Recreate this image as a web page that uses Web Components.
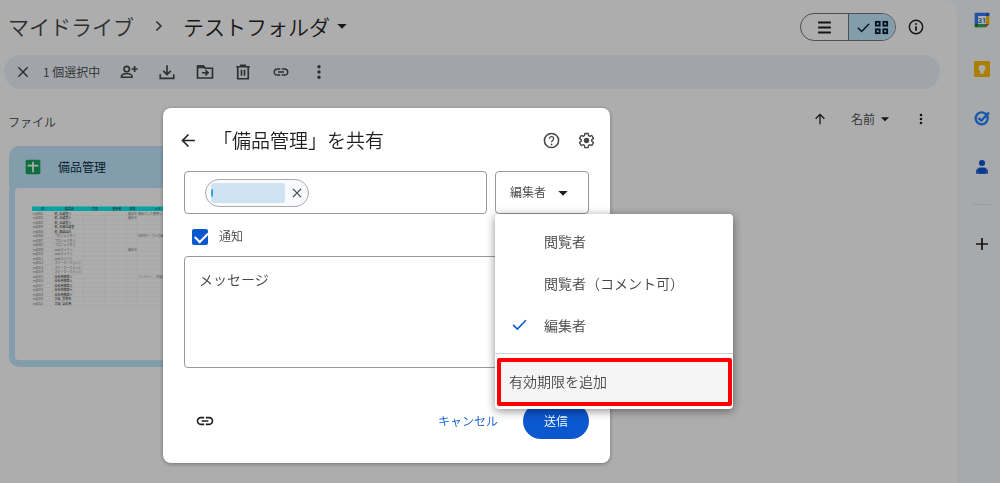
<!DOCTYPE html>
<html lang="ja">
<head>
<meta charset="utf-8">
<meta name="viewport" content="width=device-width, initial-scale=1">
<title>テストフォルダ - マイドライブ</title>
<style>
html, body { height: 100%; }
body { margin: 0; overflow: hidden; background: #f8fafd; color: #1f1f1f; font-family: "Noto Sans CJK JP", sans-serif; font-weight: 350; }
</style>
</head>
<body>
<drive-app></drive-app>
<script>
const ICONS = {
  close: '<path d="M5 5l14 14M19 5L5 19" class="s"/>',
  person: '<g class="s"><circle cx="9" cy="8" r="3.6"/><path d="M2 19v-1.500c0-2.200 4-3.500 7-3.500s7 1.300 7 3.500V19z"/><path d="M19.500 4v8M15.500 8h8"/></g>',
  download: '<path d="M12 3v12M7 10.500l5 5 5-5M3 15v5.500h18V15" class="s"/>',
  folder: '<path d="M2 4v16h20V7H12l-2-3H2z" class="s"/><path d="M8 13h7M12.500 9.500L16 13l-3.500 3.500" class="s"/><path d="M2 3h8l3 4H2z"/>',
  trash: '<path d="M5 6v15h14V6M3 5h18M9 4.500V3h6v1.500M10 9v8M14 9v8" class="s"/>',
  link: '<path d="M3.900 12c0-1.710 1.390-3.100 3.100-3.100h4V7H7c-2.760 0-5 2.240-5 5s2.240 5 5 5h4v-1.900H7c-1.710 0-3.100-1.390-3.100-3.100zM8 13h8v-2H8v2zm9-6h-4v1.900h4c1.710 0 3.100 1.390 3.100 3.100s-1.390 3.100-3.100 3.100h-4V17h4c2.760 0 5-2.240 5-5s-2.240-5-5-5z"/>',
  dots: '<circle cx="12" cy="5" r="2.200"/><circle cx="12" cy="12" r="2.200"/><circle cx="12" cy="19" r="2.200"/>',
  chevron: '<path d="M8.500 6l6 6-6 6" class="s"/>',
  caret: '<path d="M5 9h14l-7 7z"/>',
  list: '<path d="M3 5h18M3 12h18M3 19h18" class="s" style="stroke-width:3"/>',
  check: '<path d="M3 12.500l6 6L21 6" class="s"/>',
  grid: '<g class="s" style="stroke-width:3"><rect x="3" y="3" width="6" height="6"/><rect x="15" y="3" width="6" height="6"/><rect x="3" y="15" width="6" height="6"/><rect x="15" y="15" width="6" height="6"/></g>',
  info: '<circle cx="12" cy="12" r="10" class="s"/><path d="M12 11v6.500" class="s" style="stroke-width:2.600"/><circle cx="12" cy="7.500" r="1.500"/>',
  up: '<path d="M12 21V4M4.500 11.500L12 4l7.500 7.500" class="s"/>',
  back: '<path d="M21 12H4M12 3.500L3.500 12l8.500 8.500" class="s"/>',
  help: '<circle cx="12" cy="12" r="10" class="s"/><path d="M9 9.500c0-3.800 6-3.800 6 0 0 2.300-3 2.500-3 5" class="s" style="stroke-width:1.800"/><circle cx="12" cy="17.500" r="1.300"/>',
  gear: '<path d="M19.430 12.980c.04-.32.07-.64.07-.98 0-.34-.03-.66-.07-.98l2.110-1.650c.19-.15.24-.42.12-.64l-2-3.460c-.09-.16-.26-.25-.44-.25-.06 0-.12.01-.17.03l-2.490 1c-.52-.4-1.080-.73-1.690-.98l-.38-2.650C14.460 2.180 14.250 2 14 2h-4c-.25 0-.46.18-.49.42l-.38 2.650c-.61.25-1.170.59-1.690.98l-2.490-1c-.06-.02-.12-.03-.18-.03-.17 0-.34.09-.43.25l-2 3.460c-.13.22-.07.49.12.64l2.110 1.650c-.04.32-.07.65-.07.98 0 .33.03.66.07.98l-2.110 1.650c-.19.15-.24.42-.12.64l2 3.460c.09.16.26.25.44.25.06 0 .12-.01.17-.03l2.490-1c.52.4 1.080.73 1.690.98l.38 2.650c.03.24.24.42.49.42h4c.25 0 .46-.18.49-.42l.38-2.650c.61-.25 1.170-.59 1.690-.98l2.490 1c.06.02.12.03.18.03.17 0 .34-.09.43-.25l2-3.460c.12-.22.07-.49-.12-.64z" class="s" style="stroke-width:2"/><circle cx="12" cy="12" r="3.800"/>',
  plus: '<path d="M12 3v18M3 12h18" class="s" style="stroke-width:2.600"/>',
  sheets: '<rect x="1" y="1" width="22" height="22" rx="2.500" fill="#16a45c"/><path d="M12 4v16M4 10h16" fill="none" stroke="#fff" stroke-width="2.600"/>',
  calendar: '<path d="M2 1h16v5H6v12H1V2z" fill="#3479f4"/><path d="M18 1h4a1 1 0 0 1 1 1v4h-5z" fill="#1b5fd0"/><path d="M18 6h5v12h-5z" fill="#fbbc04"/><path d="M6 18h12v5H6z" fill="#34a853"/><path d="M1 18h5v5H2a1 1 0 0 1-1-1z" fill="#188038"/><path d="M18 18h5l-5 5z" fill="#ea4335"/><path d="M6 6h12v12H6z" fill="#fff"/><text x="12" y="16" text-anchor="middle" font-family="Roboto" font-size="11" font-weight="500" fill="#1967d2">31</text>',
  keep: '<rect x="0" y="0" width="24" height="24" rx="2" fill="#fbbc04"/><circle cx="12" cy="11" r="5" fill="#fff"/><path d="M9.500 15h5v4h-5z" fill="#fff"/>',
  tasks: '<circle cx="11.500" cy="12.500" r="9" fill="none" stroke="#2684fc" stroke-width="3.600"/><path d="M6.500 12l4.500 4L22.500 4" fill="none" stroke="#2684fc" stroke-width="3.600"/>',
  contact: '<circle cx="12" cy="6" r="4.600" fill="#0b57d0"/><path d="M3 22v-4c0-3 3-5 6-5h6c3 0 6 2 6 5v4z" fill="#3b63e0"/><path d="M7 13h10v9H7z" fill="#0b57d0"/>'
};

const BASE = `*{box-sizing:border-box}
button,input,select,textarea{font:inherit;color:inherit;margin:0}
button{border:0;background:none;padding:0;display:flex;align-items:center;justify-content:center;line-height:inherit}
h1,h2,p,ul,ol{margin:0;padding:0;font:inherit;list-style:none}
a{color:inherit;text-decoration:none}`;

function define(name, css, html) {
  const template = document.createElement('template');
  template.innerHTML = `<style>${BASE}${css}</style>${html}`;
  customElements.define(name, class extends HTMLElement {
    constructor() {
      super();
      this.attachShadow({ mode: 'open' }).append(template.content.cloneNode(true));
    }
  });
}

customElements.define('drive-icon', class extends HTMLElement {
  connectedCallback() {
    const root = this.shadowRoot || this.attachShadow({ mode: 'open' });
    root.innerHTML = `<style>:host{display:block;flex:none;width:var(--size,18px);height:var(--size,18px)}
      svg{display:block;width:100%;height:100%;fill:currentColor}
      .s{fill:none;stroke:currentColor;stroke-width:2.200}</style>
      <svg viewBox="0 0 24 24" aria-hidden="true">${ICONS[this.getAttribute('name')]}</svg>`;
  }
});

define('drive-breadcrumbs', `:host{display:block;font-size:21px;line-height:24px}
  ol{display:flex;align-items:center}
  li:first-child{color:#444746}
  .sep{--size:18px;margin:0 15px 0 16px;color:#444746}
  button{gap:4px;--size:16px}`,
  `<nav aria-label="パンくずリスト"><ol>
    <li><a href="#my-drive">マイドライブ</a></li>
    <li class="sep"><drive-icon name="chevron"></drive-icon></li>
    <li><button>テストフォルダ<drive-icon name="caret"></drive-icon></button></li>
  </ol></nav>`);

define('drive-view-toggle', `:host{display:flex;align-items:center;gap:12px}
  .group{display:flex;border:1px solid #747775;border-radius:14px;overflow:hidden}
  .group button{width:47px;height:26px;--size:15px}
  .group button:first-child{--size:17px}
  .group .on{border-left:1px solid #747775;background:#c2e7ff;gap:3px;color:#001d35}
  .info{--size:16px}`,
  `<div class="group"><button aria-label="リスト"><drive-icon name="list"></drive-icon></button>
    <button class="on" aria-label="グリッド" aria-pressed="true"><drive-icon name="check"></drive-icon><drive-icon name="grid"></drive-icon></button></div>
  <button class="info" aria-label="詳細"><drive-icon name="info"></drive-icon></button>`);

define('drive-selection-bar', `:host{display:flex;align-items:center;gap:20px;height:34px;padding:0 11px;border-radius:17px;background:#edf2fa;color:#444746;font-size:12px}
  .close{--size:16px;margin-right:-8px}
  p{padding-bottom:2px}`,
  `<button class="close" aria-label="選択を解除"><drive-icon name="close"></drive-icon></button>
  <p>1 個選択中</p>
  <button aria-label="共有"><drive-icon name="person"></drive-icon></button>
  <button aria-label="ダウンロード"><drive-icon name="download"></drive-icon></button>
  <button aria-label="移動"><drive-icon name="folder"></drive-icon></button>
  <button aria-label="削除"><drive-icon name="trash"></drive-icon></button>
  <button aria-label="リンクをコピー"><drive-icon name="link"></drive-icon></button>
  <button aria-label="その他"><drive-icon name="dots"></drive-icon></button>`);

define('drive-sort-bar', `:host{display:flex;align-items:center;justify-content:space-between;font-size:12px;line-height:18px;color:#444746}
  h2{padding-top:6px}
  div{display:flex;align-items:center;--size:14px}
  .name{gap:3px;margin:0 22px 0 24px}
  drive-icon{color:#1f1f1f}`,
  `<h2>ファイル</h2>
  <div><button aria-label="並べ替えの方向"><drive-icon name="up"></drive-icon></button>
  <button class="name">名前<drive-icon name="caret"></drive-icon></button>
  <button aria-label="その他"><drive-icon name="dots"></drive-icon></button></div>`);

/* Sheet preview: drawn at double scale, like the thumbnail of a printed page. */
const ITEMS = ['机_会議室①','机_会議室②','机_会議室③','机_応接会議室','机_商談倉庫','プロジェクタ①','プロジェクタ②','プロジェクタ③',
  'webカメラ①','webカメラ②','webカメラ③','スピーカーフォン①','スピーカーフォン②','スピーカーフォン③',
  '会社用携帯①','会社用携帯②','会社用携帯③','会社用携帯④','会社用携帯⑤','台車_営業所','台車_倉庫用'];
customElements.define('sheet-preview', class extends HTMLElement {
  connectedCallback() {
    const t = (x, y, s, b) => `<text x="${x}" y="${y}"${b ? ' class="b"' : ''}>${s}</text>`;
    let out = '<rect x="34" y="37" width="340" height="9" fill="#00f0f0"/>';
    [[52,'ID'],[100,'備品名'],[154,'写真'],[195,'使用者'],[229,'状態'],[280,'メモ']].forEach(([x, s]) => out += t(x, 44, s, true));
    ITEMS.forEach((item, i) => {
      const y = 53 + i * 9;
      out += `<path d="M34 ${y + 2}h340"/>` + t(36, y, 'eq00' + String(i + 1).padStart(2, '0')) + t(79, y, item, i < 5 || i > 13);
      if (i === 0 || i === 1 || i === 8) out += t(226, y, '貸出中');
    });
    out += t(246, 53, '備品として使用しています') + t(246, 98, 'HDMIケーブル付属') + t(246, 179, 'バッテリー、充電器付き');
    [76, 136, 180, 222, 244].forEach(x => out += `<path d="M${x} 46v190"/>`);
    this.attachShadow({ mode: 'open' }).innerHTML = `<style>:host{display:block;overflow:hidden;background:#fff;border-radius:4px}
      svg{display:block;width:200px;height:172px;font-family:"Noto Sans CJK JP",sans-serif;font-size:6px;font-weight:400;fill:#777}
      .b{fill:#444;font-weight:500}
      path{stroke:#eee;stroke-width:1}</style><svg viewBox="0 0 400 344" aria-label="備品管理のプレビュー">${out}</svg>`;
  }
});

define('drive-file-card', `:host{display:flex;flex-direction:column;width:212px;padding:0 6px 7px;border-radius:10px;background:#c2e7ff;color:#001d35;font-size:12px}
  header{display:flex;align-items:center;gap:17px;height:42px;padding-left:10px;--size:16px}
  span{padding-bottom:2px}`,
  `<header><drive-icon name="sheets"></drive-icon><span><slot></slot></span></header><sheet-preview></sheet-preview>`);

define('drive-side-rail', `:host{display:flex;flex-direction:column;align-items:center;gap:33px;width:43px;padding:12px 0 0 7px;--size:16px}
  hr{width:18px;height:1px;margin:-4px 0 -2px;border:0;background:#e3e6ea}`,
  `<button aria-label="カレンダー"><drive-icon name="calendar"></drive-icon></button>
  <button aria-label="Keep"><drive-icon name="keep"></drive-icon></button>
  <button aria-label="ToDo リスト"><drive-icon name="tasks"></drive-icon></button>
  <button aria-label="連絡先"><drive-icon name="contact"></drive-icon></button><hr>
  <button aria-label="アドオンを取得"><drive-icon name="plus"></drive-icon></button>`);

define('user-chip', `:host{display:flex;align-items:center;justify-content:space-between;width:104px;height:28px;padding:0 4px 0 5px;border:1px solid #aaa;border-radius:14px;background:#f8fafd;color:#444746;--size:14px}
  span{position:relative;width:74px;height:20px;border-radius:3px;background:#cfe2f3}
  span::before{content:"";position:absolute;left:0;top:6px;width:2px;height:8px;border-radius:2px 0 0 2px;background:#35a4dc}`,
  `<span></span><button aria-label="削除"><drive-icon name="close"></drive-icon></button>`);

define('role-menu', `:host{display:block;padding:7px 0 3px;border-radius:4px;background:#fff;box-shadow:0 2px 10px rgba(0,0,0,.45);font-size:14px;color:#444746}
  li button{width:100%;height:42px;padding:0 0 3px 16px;gap:16px;justify-content:flex-start;--size:17px}
  li drive-icon{color:#0b57d0}
  .pad button{padding-left:49px}
  hr{height:1px;margin:6px 0 4px;border:0;background:#d0d0d0}
  .expiry{width:calc(100% - 3px);height:48px;margin:0 1px 0 2px;padding:0 0 3px 8px;justify-content:flex-start;border:4px solid #f00;border-radius:2px;background:#f5f5f5}`,
  `<ul><li class="pad"><button>閲覧者</button></li>
  <li class="pad"><button>閲覧者（コメント可）</button></li>
  <li><button aria-current="true"><drive-icon name="check"></drive-icon>編集者</button></li></ul>
  <hr><button class="expiry">有効期限を追加</button>`);

define('share-dialog', `:host{display:flex;flex-direction:column;width:447px;height:355px;padding:17px 21px 24px;border-radius:8px;background:#fff;box-shadow:0 1px 4px rgba(0,0,0,.35);font-size:12px;color:#444746}
  header{display:flex;align-items:center;height:30px;margin-bottom:16px;color:#1f1f1f;--size:17px}
  h1{flex:1;margin-left:16px;font-size:19px;line-height:28px}
  .tools{display:flex;gap:18px;margin-right:-6px;color:#444746}
  .back{margin-left:-4px}
  .people{display:flex;gap:8px}
  .field{flex:1;display:flex;align-items:center;min-width:0;height:43px;padding:0 20px;border:1px solid #999;border-radius:4px}
  .field input{flex:1;min-width:0;border:0;outline:0;background:none}
  .role{position:relative;width:94px;height:43px}
  select{width:100%;height:100%;padding:0 14px 2px;border:1px solid #999;border-radius:4px;background:#fff;appearance:none;outline:0}
  .role>drive-icon{position:absolute;right:18px;top:14px;--size:16px;color:#1f1f1f;pointer-events:none}
  role-menu{position:absolute;left:0;top:100%;width:238px;z-index:1}
  .notify{display:flex;align-items:center;gap:11px;height:42px;padding:4px 0 0 8px}
  .notify span{padding-bottom:3px}
  .notify input{appearance:none;display:grid;width:16px;height:16px;border-radius:2px;background:#0b57d0}
  .notify input::after{content:"";width:11px;height:6px;margin:3px 0 0 3px;border:solid #fff;border-width:0 0 2px 2px;transform:rotate(-45deg)}
  textarea{display:block;width:100%;height:112px;padding:10px 14px;border:1px solid #999;border-radius:4px;resize:none;outline:0;font-size:14px;line-height:24px}
  textarea::placeholder{color:#444746;opacity:1}
  footer{display:flex;align-items:center;margin-top:auto;height:36px}
  footer button{padding-bottom:2px}
  footer .copy{margin:0 auto 0 11px;padding:0;--size:20px;color:#1f1f1f}
  .cancel{margin-right:25px;color:#0b57d0}
  .send{width:66px;height:36px;border-radius:18px;background:#0b57d0;color:#fff}`,
  `<header><button class="back" aria-label="戻る"><drive-icon name="back"></drive-icon></button>
    <h1>「備品管理」を共有</h1>
    <div class="tools"><button aria-label="ヘルプ"><drive-icon name="help"></drive-icon></button>
    <button aria-label="設定"><drive-icon name="gear"></drive-icon></button></div></header>
  <div class="people">
    <div class="field"><user-chip></user-chip><input type="text" aria-label="ユーザーを追加"></div>
    <div class="role"><select aria-label="権限"><option>閲覧者</option><option>閲覧者（コメント可）</option><option selected>編集者</option></select>
      <drive-icon name="caret"></drive-icon><role-menu></role-menu></div>
  </div>
  <label class="notify"><input type="checkbox" checked><span>通知</span></label>
  <textarea placeholder="メッセージ" aria-label="メッセージ"></textarea>
  <footer><button class="copy" aria-label="リンクをコピー"><drive-icon name="link"></drive-icon></button>
    <button class="cancel">キャンセル</button><button class="send">送信</button></footer>`);

define('drive-app', `:host{display:flex;min-height:100%}
  main{flex:1;min-width:0;padding:13px 17px 0 8px;border-radius:0 14px 0 0;background:#fff}
  .top{display:flex;align-items:center;justify-content:space-between;height:28px;padding-right:16px}
  drive-breadcrumbs{padding-bottom:2px}
  drive-selection-bar{margin:14px 0 18px -4px}
  drive-sort-bar{padding-right:12px;margin-bottom:15px}
  drive-file-card{margin-left:1px}
  .scrim{position:fixed;inset:0;padding:108px 0 0 163px;background:rgba(0,0,0,.32)}`,
  `<main><div class="top"><drive-breadcrumbs></drive-breadcrumbs><drive-view-toggle></drive-view-toggle></div>
    <drive-selection-bar></drive-selection-bar>
    <drive-sort-bar></drive-sort-bar>
    <drive-file-card>備品管理</drive-file-card></main>
  <drive-side-rail></drive-side-rail>
  <div class="scrim"><share-dialog role="dialog"></share-dialog></div>`);
</script>
</body>
</html>
